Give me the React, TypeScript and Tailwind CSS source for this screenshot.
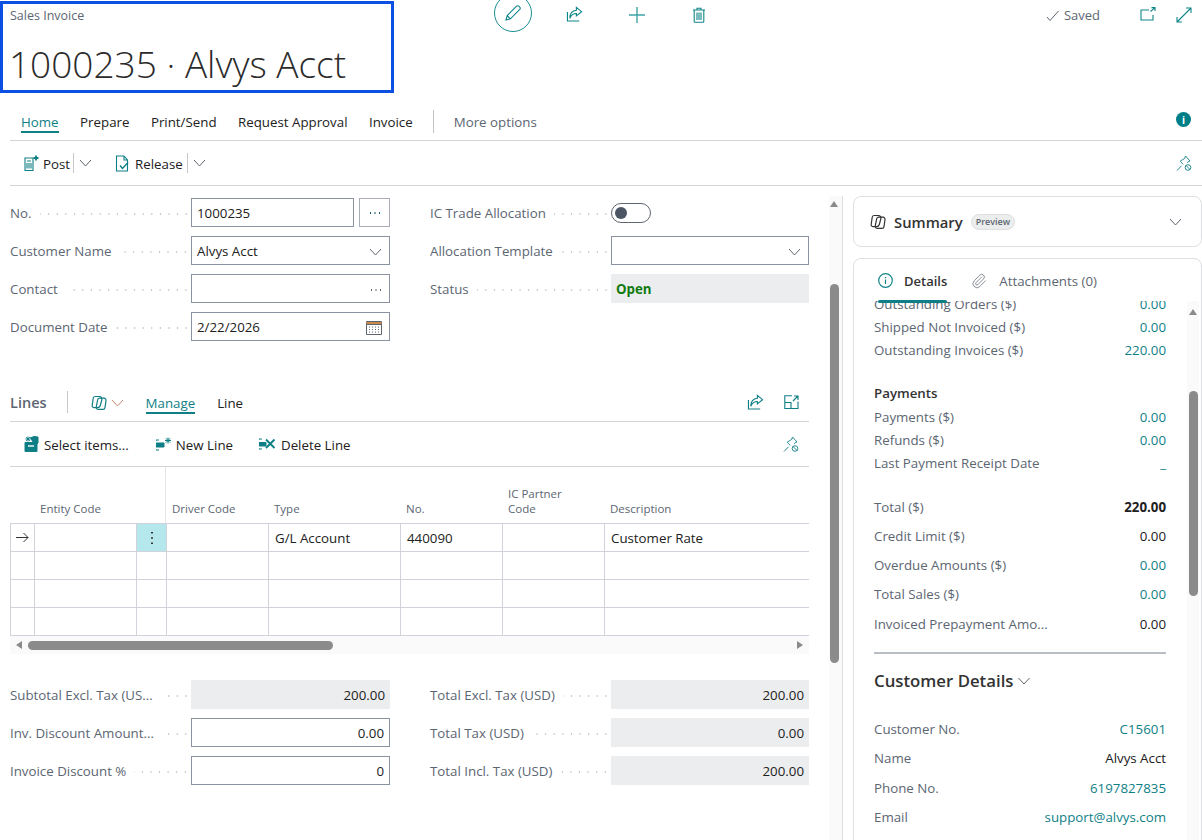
import React from "react";
import { Paperclip } from "lucide-react";

const Ic = ({ w = 16, h = 16, vb = "0 0 16 16", children, cls = "" }: any) => (
  <svg width={w} height={h} viewBox={vb} fill="none" stroke="currentColor" strokeWidth="1" className={"shrink-0 " + cls}>{children}</svg>
);
const Chevron = ({ w = 13, cls = "text-[#5f6670]" }: any) => (
  <Ic w={w} h={8} vb="0 0 13 8" cls={cls}><path d="M1 1l5.5 6L12 1" /></Ic>
);
const Copilot = ({ cls = "" }: any) => (
  <Ic w={17} h={17} vb="0 0 17 17" cls={cls}>
    <path d="M4 2.5h4.5a2.5 2.5 0 0 1 2.4 3l-1.6 6a3 3 0 0 1-2.9 2.2H3.2a2 2 0 0 1-2-2.4l1-7a2 2 0 0 1 1.8-1.8z" strokeWidth="1.2" />
    <path d="M8 4.2h5a2 2 0 0 1 2 2.3l-1 7.2a2 2 0 0 1-2 1.7H7.5a2.2 2.2 0 0 1-2.2-2.8l1.4-6.9A2 2 0 0 1 8 4.2z" strokeWidth="1.2" />
  </Ic>
);
const ShareI = () => (
  <Ic w={17} h={16} vb="0 0 18 17">
    <path d="M1.5 6.5v9.5h12.5" strokeWidth="1.2" />
    <path d="M11 1.5l5.5 4.5-5.5 4.5V8C8 8 5.5 9.5 4 13c0-5 2.5-8 7-8.5z" strokeWidth="1.2" />
  </Ic>
);
const PinOff = () => (
  <Ic w={16} h={17} vb="0 0 16 17">
    <path d="M9.5 1l4.5 5-1.6.4-1 1.6M9.5 1L8.7 3.4 4.2 6.2l3 3.2M1 15.5l4.5-4.7" strokeWidth="0.9" />
    <circle cx="12" cy="12.5" r="2.8" strokeWidth="0.9" />
    <path d="M10 10.5l4 4" strokeWidth="0.9" />
  </Ic>
);
const Dots = () => (
  <div className="flex-1 ml-[8px] mr-px h-[4px] min-w-0 bg-[radial-gradient(circle,#c4c6c8_0.8px,transparent_1.1px)] bg-[length:8.6px_4px] bg-repeat-x bg-right" />
);
const Label = ({ children, w }: any) => (
  <div className={"flex items-center shrink-0 text-[#5c6672] pt-[2px] " + w}>
    <span className="whitespace-nowrap">{children}</span>
    <Dots />
  </div>
);
const box = "h-[29px] border border-[#8a93a2] bg-white flex items-center px-[5px] pt-[2px] text-[#212121]";
const Field = ({ label, w = "w-[181px]", children }: any) => (
  <div className="flex h-[29px] mb-[9px] items-center">
    <Label w={w}>{label}</Label>
    {children}
  </div>
);
const RoBox = ({ children }: any) => (
  <div className="flex-1 h-[29px] bg-[#ecedee] flex items-center justify-end px-[5px] pt-[2px] text-[#212121]">{children}</div>
);
const NumBox = ({ children }: any) => (
  <div className={box + " flex-1 justify-end"}>{children}</div>
);
const SideRow = ({ l, v, h = "h-[23px]", c = "text-[#0f7f86]" }: any) => (
  <div className={"flex items-center justify-between " + h}>
    <span className="text-[#5c6672] whitespace-nowrap">{l}</span>
    <span className={c + " whitespace-nowrap"}>{v}</span>
  </div>
);
const Cell = ({ children, cls = "" }: any) => (
  <div className={"border-l border-b border-[#d2d3da] h-[28px] flex items-center px-[6px] pt-[2px] text-[#212121] whitespace-nowrap " + cls}>{children}</div>
);
const Th = ({ children, cls = "" }: any) => (
  <div className={"flex items-end pb-[7px] px-[6px] text-[11.5px] leading-[15px] text-[#5c6672] " + cls}>{children}</div>
);

export default function App() {
  return (
    <div className="w-[1202px] h-[840px] overflow-hidden bg-white flex flex-col text-[13.3px] font-['Open_Sans','Liberation_Sans',sans-serif] text-[#212121]">
      {/* Header */}
      <div className="flex items-start h-[105px] shrink-0 text-[#0f8589]">
        <div className="mt-px w-[394px] h-[92px] shrink-0 border-[3px] border-[#0b50e3] pl-[7px]">
          <div className="text-[12.5px] leading-[18px] mt-[3px] text-[#5c6672]">Sales Invoice</div>
          <div className="text-[37px] leading-[48px] mt-[15px] -ml-px font-light text-[#2b2b2b] whitespace-nowrap">1000235 · Alvys Acct</div>
        </div>
        <div className="ml-[100px] -mt-[6px] w-[38px] h-[38px] rounded-full border border-[#1a8f93] flex items-center justify-center shrink-0">
          <Ic w={18} h={18} vb="0 0 18 18">
            <path d="M2 16l1.2-4.4L12.6 2.2a1.6 1.6 0 0 1 2.3 0l.9.9a1.6 1.6 0 0 1 0 2.3L6.4 14.8 2 16zM3.2 11.6l3.2 3.2" strokeWidth="1.1" />
          </Ic>
        </div>
        <div className="ml-[34px] mt-[6px]"><ShareI /></div>
        <div className="ml-[45px] mt-[6px] text-[#3fa3a6]">
          <Ic w={18} h={18} vb="0 0 18 18"><path d="M9 1v16M1 9h16" strokeWidth="1.4" /></Ic>
        </div>
        <div className="ml-[46px] mt-[7px]">
          <Ic w={14} h={16} vb="0 0 14 16">
            <path d="M1 3h12M5 3V1.2h4V3M2.2 3v11.5a.8.8 0 0 0 .8.8h8a.8.8 0 0 0 .8-.8V3M5 5.5v7.5M7 5.5v7.5M9 5.5v7.5" strokeWidth="1.1" />
          </Ic>
        </div>
        <div className="ml-auto mt-[7px] flex items-center text-[#5c6672] h-[18px]">
          <Ic w={13} h={12} vb="0 0 13 12"><path d="M1 7l3 3.5L12.5 1" /></Ic>
          <span className="ml-[5px] text-[13px]">Saved</span>
        </div>
        <div className="ml-[40px] mt-[7px]">
          <Ic w={16} h={14} vb="0 0 16 14"><path d="M9 3H1v10h12V8M10.5 4.5L15 .7M11.5.6H15v3.4" strokeWidth="1.1" /></Ic>
        </div>
        <div className="ml-[20px] mr-[10px] mt-[7px]">
          <Ic w={16} h={16} vb="0 0 16 16"><path d="M1 15L15 1M10 1h5v5M1 10v5h5" strokeWidth="1.1" /></Ic>
        </div>
      </div>

      {/* Tabs */}
      <div className="ml-[10px] h-[36px] shrink-0 border-b border-[#d4d4d4] flex items-start pl-[11px] pt-[9px]">
        <div className="flex gap-[21.5px] h-[26px] items-start">
          <div className="text-[#0f7f86] border-b-2 border-[#0f7f86] h-[19px] leading-[17px]">Home</div>
          <div className="leading-[17px]">Prepare</div>
          <div className="leading-[17px]">Print/Send</div>
          <div className="leading-[17px]">Request Approval</div>
          <div className="leading-[17px]">Invoice</div>
        </div>
        <div className="w-px h-[23px] bg-[#bfc3c7] ml-[20px] -mt-[4px]" />
        <div className="ml-[20px] leading-[17px] text-[#5c6672]">More options</div>
        <div className="ml-auto mr-[11px] -mt-[2px] w-[15px] h-[15px] rounded-full bg-[#007f86] text-white flex items-center justify-center text-[10px] font-bold leading-none">i</div>
      </div>

      {/* Action bar */}
      <div className="ml-[10px] h-[45px] shrink-0 border-b border-[#d4d4d4] flex items-center pl-[14px] text-[#0f7f86]">
        <Ic w={15} h={16} vb="0 0 15 16">
          <path d="M1 3h8v12.5H1zM3 6h4M3 8v5.5M5 8v5.5M7 8v5.5" strokeWidth="1.1" />
          <path d="M12 0.5v5M9.5 3h5" strokeWidth="1.8" />
        </Ic>
        <span className="ml-[4px] pt-[4px] text-[#212121]">Post</span>
        <div className="w-px h-[20px] bg-[#c8c8c8] ml-[3px]" />
        <Chevron cls="ml-[5px] text-[#5f6670]" />
        <div className="ml-[23px]">
          <Ic w={15} h={17} vb="0 0 15 17">
            <path d="M9 1H1.5v15h11V5L9 1zM9 1v4h3.5" strokeWidth="1.1" />
            <path d="M5 10.5l2.5 3 5.5-6" strokeWidth="1.4" />
          </Ic>
        </div>
        <span className="ml-[5px] pt-[4px] text-[#212121]">Release</span>
        <div className="w-px h-[20px] bg-[#c8c8c8] ml-[4px]" />
        <Chevron cls="ml-[5px] text-[#5f6670]" />
        <div className="ml-auto mr-[10px]"><PinOff /></div>
      </div>

      {/* Main */}
      <div className="flex flex-1 min-h-0">
        <div className="ml-[10px] w-[799px] shrink-0 pt-[12px]">
          <div className="flex gap-[40px]">
            <div className="w-[380px]">
              <Field label="No.">
                <div className={box + " w-[163px]"}>1000235</div>
                <div className="ml-[5px] w-[31px] h-[29px] border border-[#a9aeb6] flex items-center justify-center text-[#0f7f86]">
                  <Ic w={12} h={4} vb="0 0 12 4"><path d="M1 2h1M5.5 2h1M10 2h1" strokeWidth="1.8" stroke="#0f5f6a" /></Ic>
                </div>
              </Field>
              <Field label="Customer Name">
                <div className={box + " flex-1 justify-between pr-[7px]"}>Alvys Acct<Chevron /></div>
              </Field>
              <Field label="Contact">
                <div className={box + " flex-1 justify-end pr-[7px]"}>
                  <Ic w={12} h={4} vb="0 0 12 4"><path d="M1 2h1M5.5 2h1M10 2h1" strokeWidth="1.5" stroke="#333" /></Ic>
                </div>
              </Field>
              <Field label="Document Date">
                <div className={box + " flex-1 justify-between pr-[7px]"}>
                  2/22/2026
                  <Ic w={16} h={15} vb="0 0 16 15" cls="text-[#5f6670]">
                    <path d="M.5 1.5h15v13H.5zM.5 4.5h15" />
                    <path d="M.5 3h15" strokeWidth="2" stroke="#c98a4b" />
                    <path d="M3 7h1M6 7h1M9 7h1M12 7h1M3 9.5h1M6 9.5h1M9 9.5h1M12 9.5h1M3 12h1M6 12h1M9 12h1M12 12h1" />
                  </Ic>
                </div>
              </Field>
            </div>
            <div className="w-[379px]">
              <div className="flex h-[29px] mb-[9px] items-center">
                <Label w="w-[181px]">IC Trade Allocation</Label>
                <div className="w-[40px] h-[20px] rounded-full border border-[#5f6670] flex items-center pl-[3px]">
                  <div className="w-[12px] h-[12px] rounded-full bg-[#4b5563]" />
                </div>
              </div>
              <Field label="Allocation Template">
                <div className={box + " flex-1 justify-end pr-[7px]"}><Chevron /></div>
              </Field>
              <Field label="Status">
                <div className="flex-1 h-[29px] bg-[#ecedee] flex items-center px-[5px] pt-[2px] text-[#107c10] font-bold">Open</div>
              </Field>
            </div>
          </div>

          {/* Lines */}
          <div className="mt-[41px] h-[31px] border-b border-[#d4d4d4] flex items-start text-[#0f7f86]">
            <span className="text-[14.5px] leading-[24px] font-semibold text-[#5c6672]">Lines</span>
            <div className="w-px h-[22px] bg-[#c8c8c8] ml-[20px]" />
            <div className="ml-[23px] mt-[3px]"><Copilot /></div>
            <Chevron cls="ml-[3px] mt-[8px] text-[#c98a70]" />
            <div className="ml-[22px] h-[23px] border-b-2 border-[#0f7f86] leading-[24px]">Manage</div>
            <div className="ml-[22px] leading-[24px] text-[#212121]">Line</div>
            <div className="ml-auto mr-[20px] mt-[3px]"><ShareI /></div>
            <div className="mr-[10px] mt-[4px]">
              <Ic w={15} h={14} vb="0 0 15 14"><path d="M14 6.5v7H.8V.8H8M.8 7.5H7v6M9 6l5-5M10 1h4v4" strokeWidth="1.1" /></Ic>
            </div>
          </div>
          <div className="h-[45px] border-b border-[#d4d4d4] flex items-center pl-[14px] text-[#0f7f86]">
            <Ic w={15} h={16} vb="0 0 15 16">
              <path d="M1 6.5h12v9H1z" fill="currentColor" />
              <path d="M6 2l4-1.5 4 .5v6l-3 3" fill="currentColor" />
              <path d="M4 .5v5M1.5 3h5M2.2 1.2l3.6 3.6M5.8 1.2L2.2 4.8" strokeWidth="1" />
              <path d="M4 10h6" stroke="#fff" strokeWidth="1.4" />
            </Ic>
            <span className="ml-[5px] pt-[4px] text-[#212121]">Select items...</span>
            <div className="ml-[27px]">
              <Ic w={16} h={14} vb="0 0 16 14">
                <path d="M0 6h8v4H0z" fill="currentColor" />
                <path d="M0 3h3M0 13h3M0 3v1M0 12v1" />
                <path d="M12 .5v6M9 3.5h6M9.8 1.3l4.4 4.4M14.2 1.3L9.8 5.7" strokeWidth="1" />
              </Ic>
            </div>
            <span className="ml-[4px] pt-[4px] text-[#212121]">New Line</span>
            <div className="ml-[26px]">
              <Ic w={17} h={14} vb="0 0 17 14">
                <path d="M0 5.5h7v3.5H0z" fill="currentColor" />
                <path d="M0 2h3M0 12h3M0 2v1M0 11v1" />
                <path d="M7 2.5l8.5 8.5M15.5 2.5L7 11" strokeWidth="1.9" />
              </Ic>
            </div>
            <span className="ml-[5px] pt-[4px] text-[#212121]">Delete Line</span>
            <div className="ml-auto mr-[10px]"><PinOff /></div>
          </div>

          {/* Table */}
          <div className="grid grid-cols-[24px_102px_30px_102px_132px_102px_102px_205px] h-[56px]">
            <Th />
            <Th>Entity Code</Th>
            <Th cls="border-r border-[#e6e6e6]" />
            <Th>Driver Code</Th>
            <Th>Type</Th>
            <Th>No.</Th>
            <Th>IC Partner<br />Code</Th>
            <Th>Description</Th>
          </div>
          <div className="grid grid-cols-[24px_102px_30px_102px_132px_102px_102px_205px] border-t border-[#d2d3da]">
            <Cell cls="justify-center !px-0 !pt-0">
              <Ic w={13} h={11} vb="0 0 13 11" cls="text-[#333]"><path d="M0 5.5h12M7.5 1l4.5 4.5L7.5 10" /></Ic>
            </Cell>
            <Cell />
            <Cell cls="justify-center bg-[#b4e8ec] !px-0 !pt-0">
              <Ic w={4} h={14} vb="0 0 4 14" cls="text-[#222]"><path d="M2 1v1.6M2 6.2v1.6M2 11.4V13" strokeWidth="1.8" /></Ic>
            </Cell>
            <Cell />
            <Cell>G/L Account</Cell>
            <Cell>440090</Cell>
            <Cell />
            <Cell>Customer Rate</Cell>
            {[0, 1, 2].map((r) =>
              [0, 1, 2, 3, 4, 5, 6, 7].map((c) => <Cell key={r + "-" + c} />)
            )}
          </div>
          <div className="h-[18px] bg-[#fafafa] flex items-center pl-[6px] pr-[6px]">
            <div className="w-0 h-0 border-y-[4px] border-y-transparent border-r-[6px] border-r-[#8a8a8a]" />
            <div className="ml-[6px] w-[305px] h-[9px] rounded-full bg-[#8b8b8b]" />
            <div className="ml-auto w-0 h-0 border-y-[4px] border-y-transparent border-l-[6px] border-l-[#8a8a8a]" />
          </div>

          {/* Totals */}
          <div className="flex gap-[40px] mt-[26px]">
            <div className="w-[380px]">
              <Field label="Subtotal Excl. Tax (US..."><RoBox>200.00</RoBox></Field>
              <Field label="Inv. Discount Amount..."><NumBox>0.00</NumBox></Field>
              <Field label="Invoice Discount %"><NumBox>0</NumBox></Field>
            </div>
            <div className="w-[379px]">
              <Field label="Total Excl. Tax (USD)"><RoBox>200.00</RoBox></Field>
              <Field label="Total Tax (USD)"><RoBox>0.00</RoBox></Field>
              <Field label="Total Incl. Tax (USD)"><RoBox>200.00</RoBox></Field>
            </div>
          </div>
        </div>

        {/* Page scrollbar */}
        <div className="ml-[20px] mt-[10px] w-[14px] shrink-0 bg-[#fafafa] border-r border-[#dcdde2] flex flex-col items-center pr-[3px]">
          <div className="mt-[5px] w-0 h-0 border-x-[4px] border-x-transparent border-b-[6px] border-b-[#8a8a8a]" />
          <div className="mt-[77px] w-[9px] h-[379px] rounded-full bg-[#8b8b8b]" />
        </div>

        {/* Side panel */}
        <div className="ml-[10px] flex-1 min-w-0 pt-[10px]">
          <div className="h-[51px] border border-[#dedfe2] rounded-lg flex items-center pl-[16px] pr-[19px]">
            <Copilot cls="text-[#333]" />
            <span className="ml-[7px] pt-[2px] text-[14.8px] font-semibold text-[#333]">Summary</span>
            <span className="ml-[8px] h-[16px] px-[4px] rounded-full bg-[#eceded] border border-[#dedfe2] text-[9px] leading-[14px] font-semibold text-[#5c6672]">Preview</span>
            <Chevron cls="ml-auto text-[#5f6670]" />
          </div>
          <div className="relative mt-[11px] h-[600px] border border-[#dedfe2] rounded-t-lg">
            <div className="h-[42px] flex items-start pl-[24px] pt-[14px] text-[#0f8589]">
              <Ic w={15} h={15} vb="0 0 15 15"><circle cx="7.5" cy="7.5" r="6.8" strokeWidth="1.2" /><path d="M7.5 6.5v4.5M7.5 4v1.2" strokeWidth="1.2" /></Ic>
              <span className="ml-[11px] font-semibold leading-[18px] -mt-[1px] text-[13px] text-[#333]">Details</span>
              <div className="ml-[24px] text-[#5f6670]">
                <Paperclip size={16} strokeWidth={1.1} />
              </div>
              <span className="ml-[12px] leading-[18px] -mt-[1px] text-[#5c6672]">Attachments (0)</span>
            </div>
            <div className="absolute left-[24px] top-[41px] w-[69px] h-[3px] rounded-full bg-[#0f7f86] z-10" />
            <div className="flex h-[557px] overflow-hidden">
              <div className="ml-[20px] w-[292px] shrink-0 -mt-[8px]">
                <SideRow l="Outstanding Orders ($)" v="0.00" />
                <SideRow l="Shipped Not Invoiced ($)" v="0.00" />
                <SideRow l="Outstanding Invoices ($)" v="220.00" />
                <div className="mt-[20px] h-[24px] flex items-center font-semibold text-[#333]">Payments</div>
                <SideRow l="Payments ($)" v="0.00" />
                <SideRow l="Refunds ($)" v="0.00" />
                <SideRow l="Last Payment Receipt Date" v="_" />
                <div className="mt-[18px]">
                  <SideRow h="h-[29px]" l="Total ($)" v="220.00" c="text-[#212121] font-bold" />
                  <SideRow h="h-[29px]" l="Credit Limit ($)" v="0.00" c="text-[#212121]" />
                  <SideRow h="h-[29.5px]" l="Overdue Amounts ($)" v="0.00" />
                  <SideRow h="h-[29.5px]" l="Total Sales ($)" v="0.00" />
                  <SideRow h="h-[29px]" l="Invoiced Prepayment Amo..." v="0.00" c="text-[#212121]" />
                </div>
                <div className="mt-[13px] h-[2px] bg-[#b9bdc4]" />
                <div className="mt-[14px] h-[26px] flex items-center gap-[3px] text-[16.8px] font-semibold text-[#333]">
                  Customer Details<Chevron w={14} />
                </div>
                <div className="mt-[21px]">
                  <SideRow h="h-[29.5px]" l="Customer No." v="C15601" />
                  <SideRow h="h-[29.5px]" l="Name" v="Alvys Acct" c="text-[#212121]" />
                  <SideRow h="h-[29.5px]" l="Phone No." v="6197827835" />
                  <SideRow h="h-[29.5px]" l="Email" v="support@alvys.com" />
                </div>
              </div>
              <div className="ml-[21px] w-[12px] shrink-0 bg-[#fafafa] flex flex-col items-center">
                <div className="mt-[8px] w-0 h-0 border-x-[4px] border-x-transparent border-b-[6px] border-b-[#8a8a8a]" />
                <div className="mt-[76px] w-[9px] h-[205px] rounded-full bg-[#8b8b8b]" />
              </div>
            </div>
          </div>
        </div>
      </div>
    </div>
  );
}
